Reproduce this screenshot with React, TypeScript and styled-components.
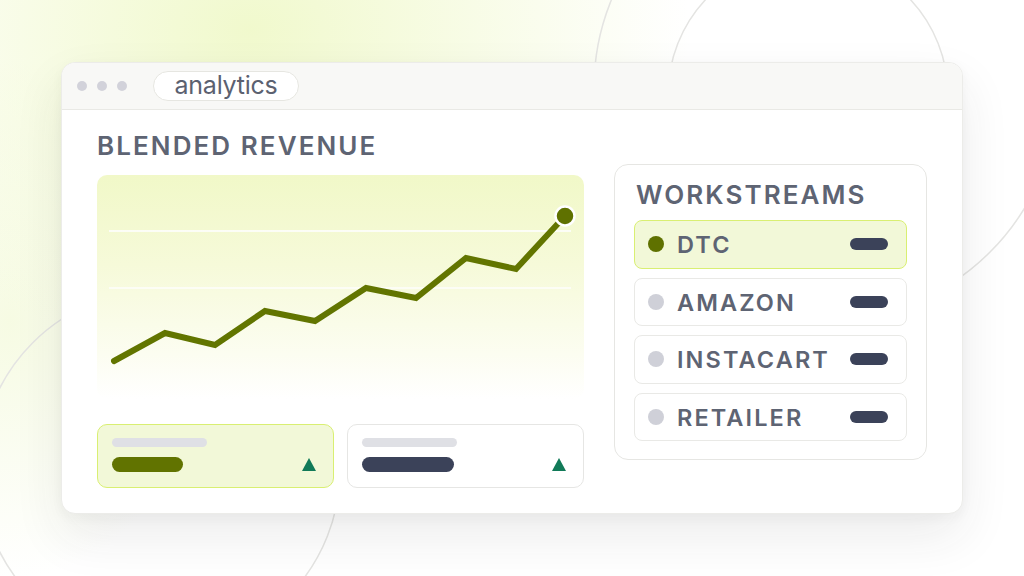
import styled, { createGlobalStyle } from 'styled-components';

const GlobalStyle = createGlobalStyle`
  html, body {
    margin: 0;
    padding: 0;
    width: 100%;
    height: 100%;
    overflow: hidden;
    background: #ffffff;
  }
  * {
    box-sizing: border-box;
  }
  body {
    font-family: 'Inter', 'Noto Sans', sans-serif;
  }
`;

const Page = styled.div`
  position: relative;
  width: 100vw;
  height: 100vh;
  display: flex;
  align-items: center;
  justify-content: center;
  background:
    radial-gradient(ellipse 440px 330px at 250px 30px, rgba(238, 248, 196, 0.85), rgba(255, 255, 255, 0) 100%),
    radial-gradient(ellipse 200px 260px at 10px 320px, rgba(244, 250, 220, 0.8), rgba(255, 255, 255, 0) 100%),
    #ffffff;
`;

const Decor = styled.svg`
  position: absolute;
  inset: 0;
  width: 100%;
  height: 100%;
  pointer-events: none;
`;

const Window = styled.div`
  position: relative;
  width: 902px;
  height: 452px;
  background: #ffffff;
  border-radius: 14px;
  border: 1px solid #ecece9;
  box-shadow: 0 22px 50px rgba(40, 40, 40, 0.09), 0 4px 12px rgba(40, 40, 40, 0.04);
  display: flex;
  flex-direction: column;
  overflow: hidden;
`;

const TitleBar = styled.div`
  height: 47px;
  flex-shrink: 0;
  display: flex;
  align-items: center;
  padding-left: 15px;
  background: #f8f8f6;
  border-bottom: 1px solid #e9e9e5;
`;

const Dots = styled.div`
  display: flex;
  gap: 10px;
  margin-right: 26px;
`;

const Dot = styled.span`
  width: 10px;
  height: 10px;
  border-radius: 50%;
  background: #d2d2da;
`;

const Address = styled.div`
  height: 30px;
  width: 146px;
  border-radius: 15px;
  background: #ffffff;
  border: 1.5px solid #e6e6e1;
  display: flex;
  align-items: center;
  justify-content: center;
  font-size: 25px;
  color: #5b6170;
  letter-spacing: -0.01em;
  line-height: 1;
  padding-bottom: 2px;
`;

const Content = styled.div`
  flex: 1;
  display: flex;
  gap: 30px;
  padding: 20px 35px 0 35px;
`;

const LeftColumn = styled.div`
  width: 487px;
  display: flex;
  flex-direction: column;
`;

const SectionTitle = styled.h2`
  margin: 0;
  font-size: 26px;
  line-height: 31px;
  font-weight: 600;
  letter-spacing: 0.08em;
  color: #5e6473;
  white-space: nowrap;
`;

const ChartPanel = styled.div`
  margin-top: 14px;
  height: 224px;
  border-radius: 10px;
  background: linear-gradient(180deg, #f1f8c8 0%, #f6fad9 40%, #fcfdf1 80%, #ffffff 100%);
  overflow: hidden;
`;

const StatRow = styled.div`
  margin-top: 25px;
  display: grid;
  grid-template-columns: 1fr 1fr;
  gap: 13px;
`;

const StatCard = styled.div<{ $active?: boolean }>`
  height: 64px;
  border-radius: 10px;
  border: 1.5px solid ${(p) => (p.$active ? '#d9ef72' : '#e6e6e4')};
  background: ${(p) => (p.$active ? '#f2f8d8' : '#ffffff')};
  display: flex;
  align-items: flex-end;
  justify-content: space-between;
  padding: 14px 17px 15px 14px;
`;

const StatBars = styled.div`
  display: flex;
  flex-direction: column;
  gap: 10px;
`;

const LabelBar = styled.span`
  display: block;
  width: 95px;
  height: 9px;
  border-radius: 5px;
  background: #dfe0e5;
`;

const ValueBar = styled.span<{ $width: number; $color: string }>`
  display: block;
  width: ${(p) => p.$width}px;
  height: 15px;
  border-radius: 8px;
  background: ${(p) => p.$color};
`;

const UpArrow = styled.span`
  width: 0;
  height: 0;
  border-left: 7.5px solid transparent;
  border-right: 7.5px solid transparent;
  border-bottom: 13px solid #117a58;
  margin-bottom: 1px;
`;

const Panel = styled.div`
  margin-top: 34px;
  width: 315px;
  height: 296px;
  border: 1.5px solid #e6e6e3;
  border-radius: 14px;
  padding: 14px 19px 19px 19px;
  display: flex;
  flex-direction: column;
`;

const PanelTitle = styled(SectionTitle)`
  padding-left: 2px;
`;

const StreamList = styled.div`
  margin-top: 10px;
  display: flex;
  flex-direction: column;
  gap: 9px;
`;

const StreamRow = styled.div<{ $active?: boolean }>`
  height: 48.5px;
  border-radius: 8px;
  border: 1.5px solid ${(p) => (p.$active ? '#d9ef72' : '#e9e9e6')};
  background: ${(p) => (p.$active ? '#f2f8d8' : '#ffffff')};
  display: flex;
  align-items: center;
  padding: 0 18px 0 13px;
`;

const StreamDot = styled.span<{ $active?: boolean }>`
  width: 16px;
  height: 16px;
  border-radius: 50%;
  background: ${(p) => (p.$active ? '#5f7100' : '#cfd0d8')};
  flex-shrink: 0;
`;

const StreamName = styled.span`
  margin-left: 13px;
  flex: 1;
  font-size: 23.5px;
  font-weight: 600;
  letter-spacing: 0.09em;
  color: #5e6473;
  line-height: 1;
  white-space: nowrap;
  padding-top: 1px;
`;

const StreamPill = styled.span`
  width: 38px;
  height: 12px;
  border-radius: 6px;
  background: #3b4259;
  flex-shrink: 0;
`;

const points: [number, number][] = [
  [17, 186],
  [68, 158],
  [118, 170],
  [168, 136],
  [218, 146],
  [269, 113],
  [319, 123],
  [369, 83],
  [419, 94],
  [468, 41],
];

const streams = [
  { name: 'DTC', active: true },
  { name: 'AMAZON' },
  { name: 'INSTACART' },
  { name: 'RETAILER' },
];

export default function App() {
  const line = points.map(([x, y]) => `${x},${y}`).join(' ');
  return (
    <>
      <GlobalStyle />
      <Page>
        <Decor viewBox="0 0 1024 576">
          <g fill="none" stroke="#e4e4e2" strokeWidth="1.5">
            <circle cx="808" cy="95" r="140" />
            <circle cx="826" cy="88" r="232" />
            <circle cx="160" cy="470" r="180" />
          </g>
        </Decor>
        <Window>
          <TitleBar>
            <Dots>
              <Dot />
              <Dot />
              <Dot />
            </Dots>
            <Address>analytics</Address>
          </TitleBar>
          <Content>
            <LeftColumn>
              <SectionTitle>BLENDED REVENUE</SectionTitle>
              <ChartPanel>
                <svg width="487" height="224" viewBox="0 0 487 224">
                  <line x1="12" y1="56" x2="474" y2="56" stroke="#ffffff" strokeWidth="2" opacity="0.8" />
                  <line x1="12" y1="113" x2="474" y2="113" stroke="#ffffff" strokeWidth="2" opacity="0.7" />
                  <polyline
                    points={line}
                    fill="none"
                    stroke="#627500"
                    strokeWidth="6"
                    strokeLinecap="round"
                    strokeLinejoin="miter"
                  />
                  <circle cx="468" cy="41" r="9.5" fill="#5f7100" stroke="#ffffff" strokeWidth="2.5" />
                </svg>
              </ChartPanel>
              <StatRow>
                <StatCard $active>
                  <StatBars>
                    <LabelBar />
                    <ValueBar $width={71} $color="#617300" />
                  </StatBars>
                  <UpArrow />
                </StatCard>
                <StatCard>
                  <StatBars>
                    <LabelBar />
                    <ValueBar $width={92} $color="#3b4259" />
                  </StatBars>
                  <UpArrow />
                </StatCard>
              </StatRow>
            </LeftColumn>
            <Panel>
              <PanelTitle>WORKSTREAMS</PanelTitle>
              <StreamList>
                {streams.map((s) => (
                  <StreamRow key={s.name} $active={s.active}>
                    <StreamDot $active={s.active} />
                    <StreamName>{s.name}</StreamName>
                    <StreamPill />
                  </StreamRow>
                ))}
              </StreamList>
            </Panel>
          </Content>
        </Window>
      </Page>
    </>
  );
}
